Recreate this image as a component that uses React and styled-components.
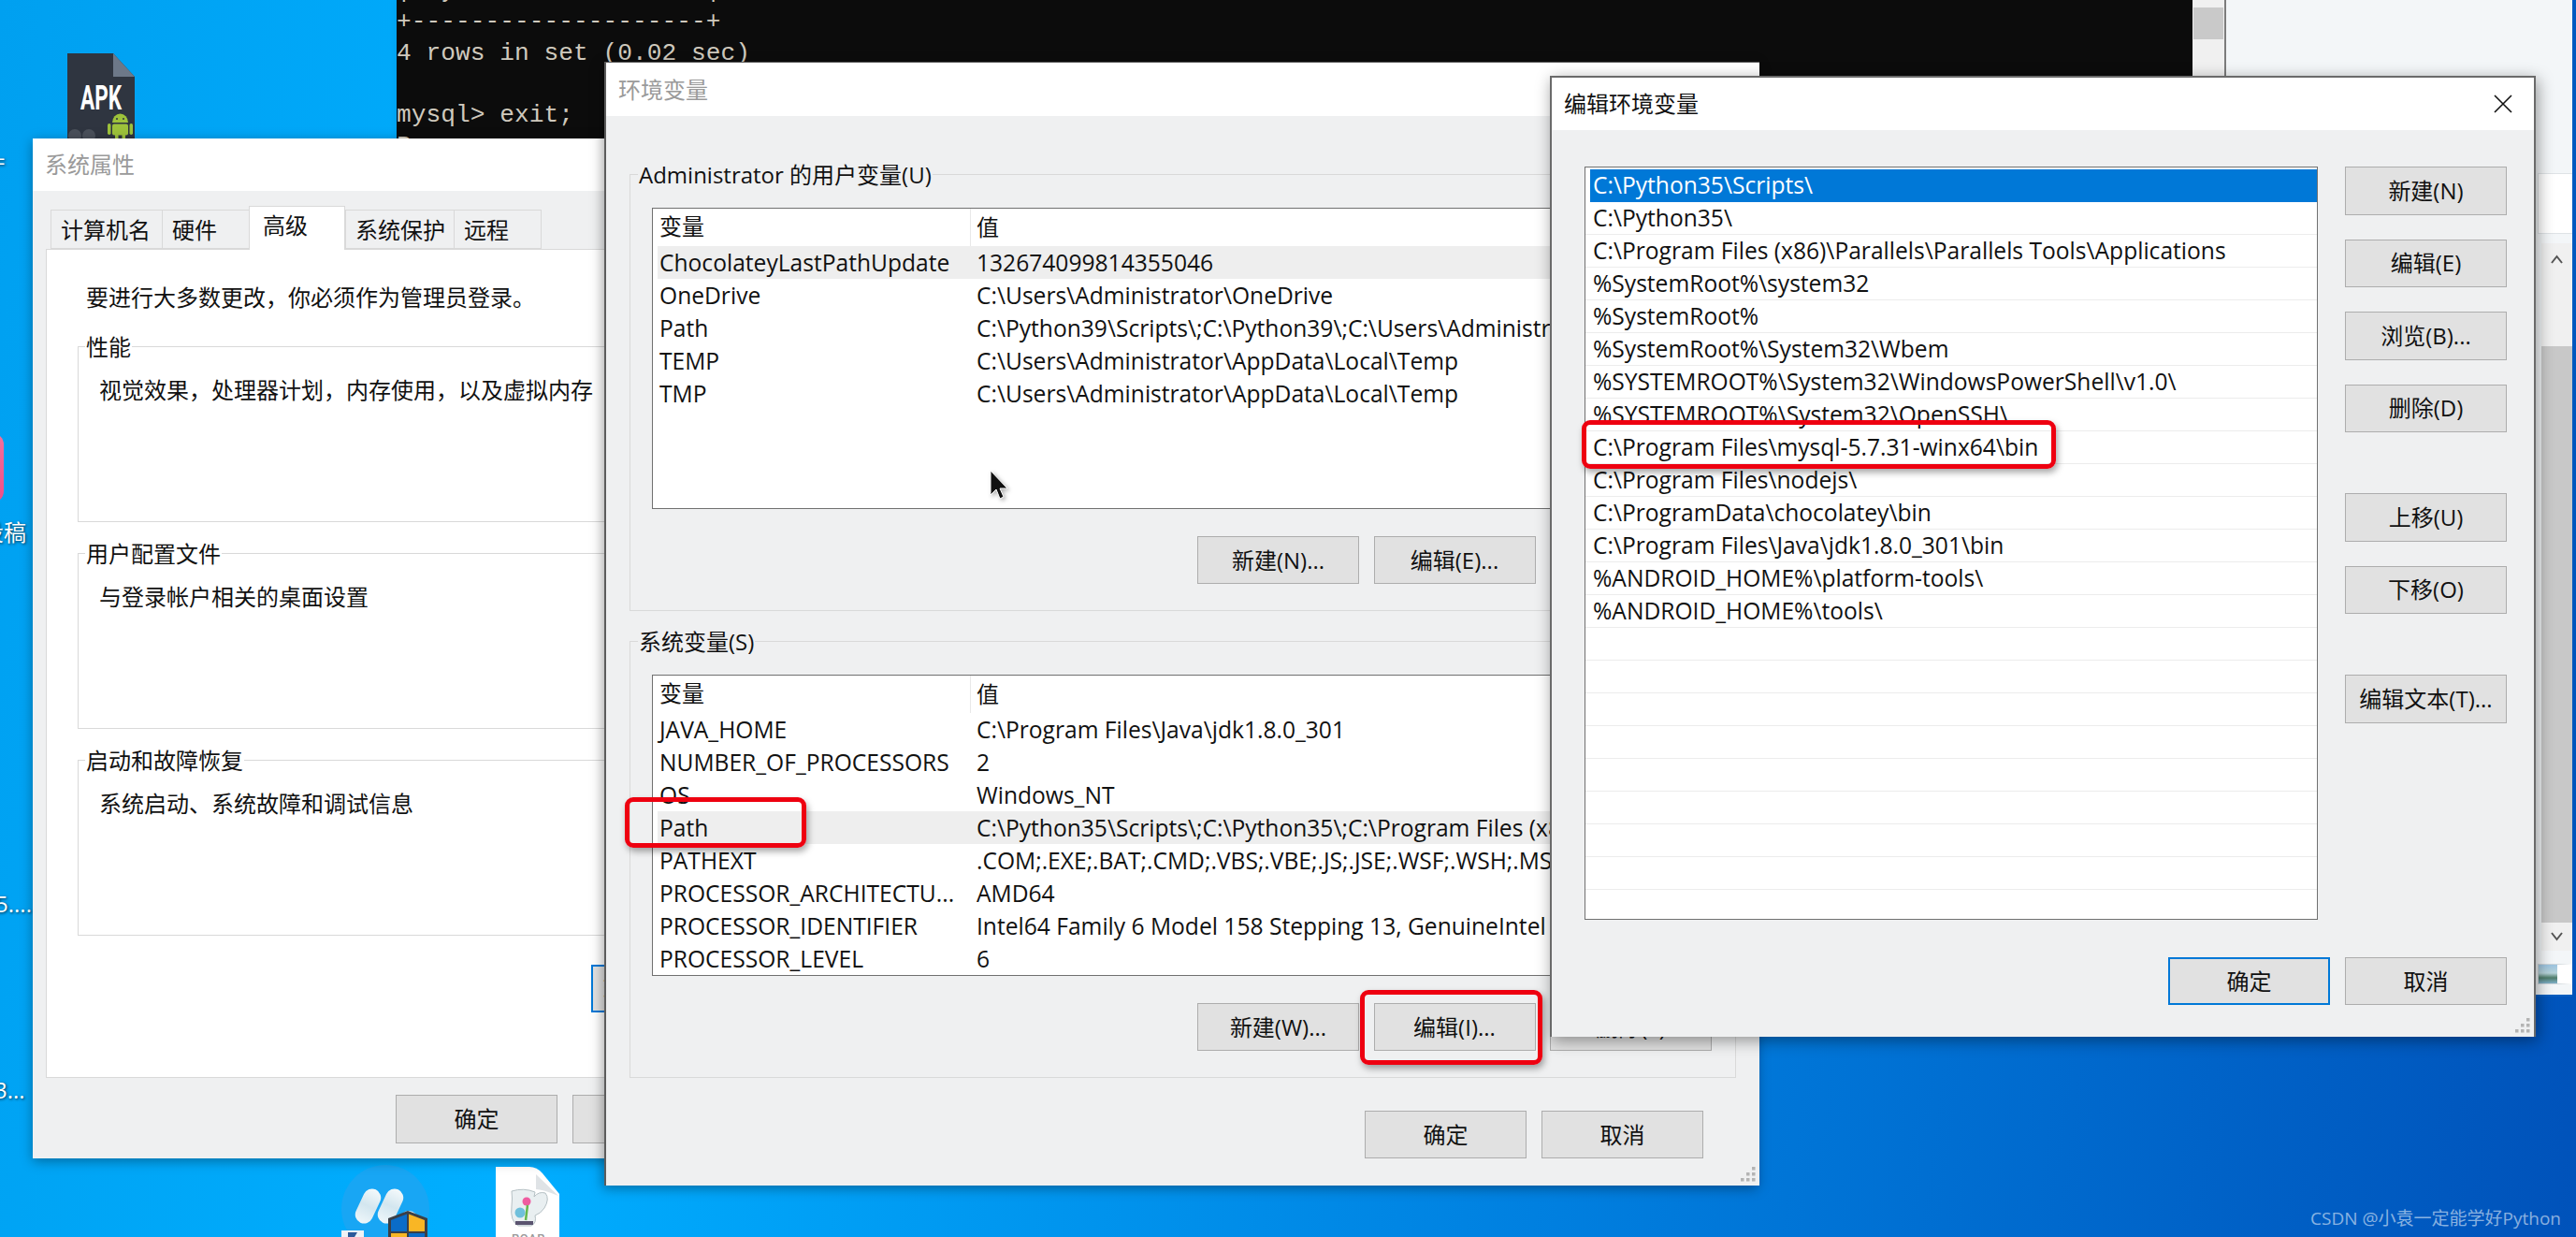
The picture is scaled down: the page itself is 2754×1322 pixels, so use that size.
import React from 'react'
import styled, { createGlobalStyle } from 'styled-components'

const GlobalStyle = createGlobalStyle`
  html, body { margin: 0; padding: 0; background: #0050b8; overflow: hidden; }
  * { box-sizing: border-box; }
  body { font-family: "Open Sans", "Noto Sans CJK SC", sans-serif; color: #111; }
`

const Desktop = styled.div`
  position: relative;
  width: 2754px;
  height: 1322px;
  overflow: hidden;
  background: linear-gradient(98deg, #00a0f0 0%, #00aeff 24%, #0080e0 62%, #0052ba 100%);
  font-size: 24px;
  line-height: 34px;
`

/* ---- desktop leftovers ---- */
const DeskLabel = styled.div`
  position: absolute;
  left: ${p => p.$x}px;
  top: ${p => p.$y}px;
  color: #fff;
  white-space: nowrap;
  text-shadow: 1px 1px 3px rgba(0, 0, 0, 0.7);
`
const PinkIcon = styled.div`
  position: absolute;
  left: -60px;
  top: 463px;
  width: 64px;
  height: 74px;
  border-radius: 12px;
  background: linear-gradient(180deg, #f4709c, #ee4d86);
`
const DeskIcon = styled.svg`
  position: absolute;
  left: ${p => p.$x}px;
  top: ${p => p.$y}px;
`

/* ---- terminal behind everything ---- */
const Terminal = styled.div`
  position: absolute;
  left: 424px;
  top: 0;
  width: 1956px;
  height: 300px;
  display: flex;
  background: #0c0c0c;
  border-right: 2px solid #7c7c7c;
  box-shadow: 4px 0 10px rgba(0, 0, 0, 0.18);
`
const TermText = styled.pre`
  flex: 1;
  margin: -26px 0 0;
  font-family: "Liberation Mono", monospace;
  font-size: 26.2px;
  letter-spacing: 0.03px;
  line-height: 33.3px;
  color: #cfc9bd;
`
const TermScroll = styled.div`
  width: 34px;
  padding: 8px 1px 0;
  background: #f0f0f0;
`
const TermThumb = styled.div`
  height: 34px;
  background: #c9c9c9;
`

/* ---- light window on the right ---- */
const BackWindow = styled.div`
  position: absolute;
  left: 2380px;
  top: 0;
  width: 370px;
  height: 1065px;
  background: #f3f6f8;
  border-bottom: 2px solid #0a5fc0;
  display: flex;
  flex-direction: column;
  align-items: flex-end;
  padding-top: 185px;
`
const BackBox = styled.div`
  width: 37px;
  height: 65px;
  background: #fff;
  border: 1px solid #dfe3e6;
  border-right: 0;
`
const BackScroll = styled.div`
  width: 33px;
  height: 756px;
  margin-top: 10px;
  background: #f0f0f0;
  padding-top: 110px;
  position: relative;
`
const BackThumb = styled.div`
  height: 616px;
  background: #c8c8c8;
`
const ScrollArrow = styled.svg`
  position: absolute;
  left: 10px;
  top: ${p => p.$y}px;
`
const BackPicture = styled.div`
  width: 37px;
  height: 22px;
  margin-top: 14px;
  border: 1px solid #cfd6da;
  border-right-width: 16px;
  border-right-color: #fff;
  background: linear-gradient(180deg, #9cc4e0 0%, #b7d3d9 45%, #4f7d6a 70%, #7fb0c8 100%);
`

/* ---- dialogs ---- */
const SystemWindow = styled.div`
  position: absolute;
  left: 35px;
  top: 148px;
  width: 800px;
  height: 1090px;
  background: #eff0f1;
  box-shadow: 0 3px 12px rgba(0, 0, 0, 0.35);
`
const EnvWindow = styled.div`
  position: absolute;
  left: 646px;
  top: 66px;
  width: 1235px;
  height: 1201px;
  background: #eff0f1;
  border: solid #5c5c5c;
  border-width: 1.5px 0 0 2px;
  box-shadow: -2px 3px 12px rgba(0, 0, 0, 0.35);
`
const EditWindow = styled.div`
  position: absolute;
  left: 1657px;
  top: 81px;
  width: 1054px;
  height: 1027px;
  background: #eff0f1;
  border: solid #6a6a6a;
  border-width: 2px 2px 0 2px;
  box-shadow: 2px 4px 16px rgba(0, 0, 0, 0.4);
`
const TitleBar = styled.div`
  height: ${p => p.$h}px;
  padding-left: ${p => p.$pad}px;
  display: flex;
  align-items: center;
  justify-content: space-between;
  background: #fff;
  color: ${p => (p.$active ? '#111' : '#9a9a9a')};
`
const CloseIcon = styled.svg`
  margin-right: 23px;
`

/* ---- system properties ---- */
const Tabs = styled.div`
  display: flex;
  align-items: flex-end;
  height: 46px;
  margin: 16px 0 0 19px;
`
const Tab = styled.div`
  width: ${p => p.$w}px;
  height: ${p => (p.$active ? 47 : 42)}px;
  padding-left: ${p => (p.$active ? 14 : 10)}px;
  padding-top: ${p => (p.$active ? 3 : 4)}px;
  margin-bottom: ${p => (p.$active ? -1 : 0)}px;
  position: relative;
  background: ${p => (p.$active ? '#fff' : '#eff0f1')};
  border: 1.5px solid #d9d9d9;
  border-bottom: ${p => (p.$active ? '0' : '1.5px solid #d9d9d9')};
  border-right-width: ${p => (p.$active ? '1.5px' : '0')};
  &:last-child { border-right-width: 1.5px; }
`
const Panel = styled.div`
  margin-left: 14px;
  width: 772px;
  height: 886px;
  padding: 34px 15px 0 33px;
  background: #fff;
  border: 1.5px solid #d9d9d9;
`
const Notice = styled.div`
  margin: 0 0 35px 9px;
`
const Group = styled.div`
  height: ${p => p.$h}px;
  margin-bottom: ${p => p.$gap}px;
  border: 1.5px solid #d9d9d9;
  background: ${p => p.$bg || 'transparent'};
`
const Legend = styled.div`
  width: fit-content;
  margin: -17px 0 0 7px;
  padding: 0 1px;
  background: ${p => p.$bg || '#eff0f1'};
`
const GroupText = styled.div`
  margin: 12px 0 0 22px;
`
const PanelAction = styled.div`
  display: flex;
  justify-content: flex-end;
  margin-top: -2px;
`
const Footer = styled.div`
  display: flex;
  justify-content: flex-end;
  gap: 16px;
  margin-top: ${p => p.$top}px;
  padding-right: ${p => p.$right}px;
`
const Btn = styled.div`
  width: 173px;
  height: ${p => p.$h || 51}px;
  flex: none;
  display: flex;
  align-items: center;
  justify-content: center;
  white-space: nowrap;
  background: #e1e1e1;
  border: ${p => (p.$primary ? '2.5px solid #0078d7' : '1.5px solid #adadad')};
`

/* ---- environment variables ---- */
const EnvBody = styled.div`
  padding: 62px 25px 0 25px;
`
const EnvGroup = styled(Group)`
  padding: 34px 23px 0 23px;
`
const EnvLegend = styled(Legend)`
  margin: -50px 0 0 -15px;
  position: relative;
  top: -1px;
`
const VarTable = styled.div`
  position: relative;
  width: 1135px;
  height: ${p => p.$h}px;
  margin-top: 17px;
  padding: 0 0 0 5px;
  overflow: hidden;
  background: #fff;
  border: 1.5px solid #707070;
  font-size: 24.6px;
`
const VarRow = styled.div`
  display: grid;
  grid-template-columns: 335px 1fr;
  height: ${p => (p.$head ? 40 : 35)}px;
  align-items: center;
  white-space: nowrap;
  background: ${p => (p.$active ? '#eeeeee' : 'transparent')};
`
const VarName = styled.div`
  padding-left: 2px;
  height: 100%;
  line-height: ${p => (p.$head ? 38 : 35)}px;
  font-size: ${p => (p.$head ? 24 : 24.6)}px;
  border-right: ${p => (p.$head ? '1.5px solid #e8e8e8' : '0')};
`
const VarValue = styled.div`
  padding-left: 6px;
  line-height: ${p => (p.$head ? 38 : 35)}px;
  font-size: ${p => (p.$head ? 24 : 24.6)}px;
`
const BtnRow = styled.div`
  display: flex;
  justify-content: flex-end;
  gap: 15.5px;
  margin-top: 29px;
  padding-right: 2px;
`

/* ---- edit dialog ---- */
const EditBody = styled.div`
  display: flex;
  gap: 29px;
  padding: 39px 0 0 35px;
`
const PathList = styled.div`
  width: 784px;
  height: 805px;
  padding-top: 1.5px;
  background: #fff;
  border: 1.5px solid #707070;
  overflow: hidden;
  font-size: 24.6px;
`
const PathRow = styled.div`
  height: 35px;
  line-height: 34px;
  margin-left: ${p => (p.$selected ? 5 : 0)}px;
  padding-left: ${p => (p.$selected ? 3 : 8)}px;
  white-space: nowrap;
  color: ${p => (p.$selected ? '#fff' : '#111')};
  background: ${p => (p.$selected ? '#0078d7' : '#fff')};
  border-bottom: 1.5px solid ${p => (p.$selected ? '#0078d7' : '#ececec')};
`
const ActionColumn = styled.div`
  display: flex;
  flex-direction: column;
  gap: 65px;
`
const ActionGroup = styled.div`
  display: flex;
  flex-direction: column;
  gap: 26px;
`
const Grip = styled.svg`
  position: absolute;
  right: 3px;
  bottom: 3px;
`

/* ---- overlays ---- */
const RedMark = styled.div`
  position: absolute;
  left: ${p => p.$x}px;
  top: ${p => p.$y}px;
  width: ${p => p.$w}px;
  height: ${p => p.$h}px;
  border: 5px solid #ee0010;
  border-radius: 9px;
  box-shadow: 2px 4px 7px rgba(0, 0, 0, 0.35);
`
const Watermark = styled.div`
  position: absolute;
  right: 16px;
  bottom: 8px;
  font-size: 19px;
  line-height: 24px;
  color: rgba(255, 255, 255, 0.55);
`
const Cursor = styled.svg`
  position: absolute;
  left: 1058px;
  top: 502px;
  filter: drop-shadow(2px 2px 2px rgba(0, 0, 0, 0.3));
`

const userVars = [
  ['ChocolateyLastPathUpdate', '132674099814355046', true],
  ['OneDrive', 'C:\\Users\\Administrator\\OneDrive'],
  ['Path', 'C:\\Python39\\Scripts\\;C:\\Python39\\;C:\\Users\\Administrator\\AppData\\Local\\Microsoft\\WindowsApps'],
  ['TEMP', 'C:\\Users\\Administrator\\AppData\\Local\\Temp'],
  ['TMP', 'C:\\Users\\Administrator\\AppData\\Local\\Temp'],
]
const systemVars = [
  ['JAVA_HOME', 'C:\\Program Files\\Java\\jdk1.8.0_301'],
  ['NUMBER_OF_PROCESSORS', '2'],
  ['OS', 'Windows_NT'],
  ['Path', 'C:\\Python35\\Scripts\\;C:\\Python35\\;C:\\Program Files (x86)\\Parallels\\Parallels Tools\\Applications', true],
  ['PATHEXT', '.COM;.EXE;.BAT;.CMD;.VBS;.VBE;.JS;.JSE;.WSF;.WSH;.MSC'],
  ['PROCESSOR_ARCHITECTU...', 'AMD64'],
  ['PROCESSOR_IDENTIFIER', 'Intel64 Family 6 Model 158 Stepping 13, GenuineIntel'],
  ['PROCESSOR_LEVEL', '6'],
]
const paths = [
  'C:\\Python35\\Scripts\\',
  'C:\\Python35\\',
  'C:\\Program Files (x86)\\Parallels\\Parallels Tools\\Applications',
  '%SystemRoot%\\system32',
  '%SystemRoot%',
  '%SystemRoot%\\System32\\Wbem',
  '%SYSTEMROOT%\\System32\\WindowsPowerShell\\v1.0\\',
  '%SYSTEMROOT%\\System32\\OpenSSH\\',
  'C:\\Program Files\\mysql-5.7.31-winx64\\bin',
  'C:\\Program Files\\nodejs\\',
  'C:\\ProgramData\\chocolatey\\bin',
  'C:\\Program Files\\Java\\jdk1.8.0_301\\bin',
  '%ANDROID_HOME%\\platform-tools\\',
  '%ANDROID_HOME%\\tools\\',
]
const emptyRows = Array.from({ length: 8 }, () => '')

const terminalText = `| sys                |
+--------------------+
4 rows in set (0.02 sec)

mysql> exit;
Bye`

const ResizeGrip = () => (
  <Grip width="18" height="18" viewBox="0 0 18 18" fill="#b4b4b4">
    <rect x="13" y="1" width="3.5" height="3.5" />
    <rect x="7" y="7" width="3.5" height="3.5" />
    <rect x="13" y="7" width="3.5" height="3.5" />
    <rect x="1" y="13" width="3.5" height="3.5" />
    <rect x="7" y="13" width="3.5" height="3.5" />
    <rect x="13" y="13" width="3.5" height="3.5" />
  </Grip>
)

const VariablesTable = ({ rows }) => (
  <VarTable $h={42 + rows.length * 35 + (rows.length < 8 ? 105 : 0)}>
    <VarRow $head>
      <VarName $head>变量</VarName>
      <VarValue $head>值</VarValue>
    </VarRow>
    {rows.map(([name, value, active]) => (
      <VarRow key={name} $active={active}>
        <VarName>{name}</VarName>
        <VarValue>{value}</VarValue>
      </VarRow>
    ))}
  </VarTable>
)

const ApkIcon = () => (
  <DeskIcon $x={72} $y={57} width="72" height="92" viewBox="0 0 72 92">
    <path d="M0 0 H49 L72 25 V92 H0 Z" fill="#2f3540" />
    <path d="M49 0 L72 25 H49 Z" fill="#6d7888" />
    <text x="14" y="60" fontFamily="Roboto, sans-serif" fontWeight="700" fontSize="36" fill="#fff" textLength="44" lengthAdjust="spacingAndGlyphs">APK</text>
    <circle cx="8" cy="88" r="7" fill="#4a505a" />
    <circle cx="23" cy="88" r="7" fill="#4a505a" />
    <path d="M48 74 a8 9 0 0 1 17 0 Z" fill="#9dc23b" />
    <circle cx="53" cy="70" r="1" fill="#2f3540" />
    <circle cx="60" cy="70" r="1" fill="#2f3540" />
    <rect x="48" y="75.500" width="17" height="12" rx="2" fill="#9dc23b" />
    <rect x="51" y="86" width="3.500" height="6" fill="#9dc23b" />
    <rect x="58.500" y="86" width="3.500" height="6" fill="#9dc23b" />
    <rect x="43" y="75" width="3.500" height="12" rx="1.700" fill="#9dc23b" />
    <rect x="66.500" y="75" width="3.500" height="12" rx="1.700" fill="#9dc23b" />
  </DeskIcon>
)

const MarkIcon = () => (
  <DeskIcon $x={362} $y={1244} width="100" height="78" viewBox="0 0 100 78">
    <defs>
      <linearGradient id="pill" x1="0" y1="0" x2="0" y2="1">
        <stop offset="0" stopColor="#f4f9fb" />
        <stop offset="0.5" stopColor="#d3e6ef" />
        <stop offset="1" stopColor="#eef6fa" />
      </linearGradient>
    </defs>
    <circle cx="50" cy="48" r="47" fill="#18a6f4" />
    <rect x="22" y="25.500" width="19" height="39" rx="9.500" transform="rotate(25 31.500 45)" fill="url(#pill)" />
    <rect x="46" y="25.500" width="19" height="39" rx="9.500" transform="rotate(25 55.500 45)" fill="url(#pill)" />
    <circle cx="75" cy="60" r="10" fill="#eef6fa" />
    <path d="M53 58 L74 50 L95 58 V78 H53 Z" fill="#3a3f47" />
    <path d="M56 60 L73 53.500 V72 H56 Z" fill="#0a6cc8" />
    <path d="M75 53.500 L92 60 V72 H75 Z" fill="#f9b625" />
    <rect x="56" y="74" width="17" height="4" fill="#f9b625" />
    <rect x="75" y="74" width="17" height="4" fill="#0a6cc8" />
    <rect x="3" y="71" width="24" height="7" fill="#eef2f5" />
    <path d="M10 73 H20 L17 78 H10 Z" fill="#2b5a9a" />
  </DeskIcon>
)

const JugIcon = () => (
  <DeskIcon $x={530} $y={1247} width="68" height="75" viewBox="0 0 68 75">
    <path d="M0 0 H36 Q44 0 50 7 L68 29 V75 H0 Z" fill="#fff" />
    <path d="M43 8 L67 31 Q50 24 43 24 Z" fill="#dfe3e6" />
    <path d="M17 26 Q30 22 42 27 L41 32 Q46 26 53 28 Q58 34 52 44 Q48 50 42 52 Q44 60 38 63 H24 Q15 58 17 42 Q18 34 17 26 Z" fill="#e9eff1" stroke="#b5c0c4" />
    <circle cx="33" cy="37" r="4.500" fill="#ef5ca0" />
    <circle cx="26" cy="49" r="5.500" fill="#6fc0dc" />
    <path d="M34 41 L32 57" stroke="#63b84c" strokeWidth="2.500" />
    <rect x="21" y="58" width="19" height="4" fill="#5b5470" />
    <text x="17" y="81" fontFamily="Roboto, sans-serif" fontSize="13" fontWeight="500" letterSpacing="0.500" fill="#999">ROAR</text>
  </DeskIcon>
)

const App = () => {
  return (
    <Desktop>
      <GlobalStyle />
      <ApkIcon />
      <DeskLabel $x={-8} $y={155}>=</DeskLabel>
      <PinkIcon />
      <DeskLabel $x={-20} $y={552}>投稿</DeskLabel>
      <DeskLabel $x={-5} $y={949}>5....</DeskLabel>
      <DeskLabel $x={-6} $y={1148}>3...</DeskLabel>
      <MarkIcon />
      <JugIcon />

      <Terminal>
        <TermText>{terminalText}</TermText>
        <TermScroll><TermThumb /></TermScroll>
      </Terminal>

      <BackWindow>
        <BackBox />
        <BackScroll>
          <ScrollArrow $y={12} width="13" height="10" viewBox="0 0 13 10" fill="none" stroke="#555" strokeWidth="2"><path d="M1 9 L6.500 2 L12 9" /></ScrollArrow>
          <BackThumb />
          <ScrollArrow $y={736} width="13" height="10" viewBox="0 0 13 10" fill="none" stroke="#555" strokeWidth="2"><path d="M1 1 L6.500 8 L12 1" /></ScrollArrow>
        </BackScroll>
        <BackPicture />
      </BackWindow>

      <SystemWindow>
        <TitleBar $h={56} $pad={13}>系统属性</TitleBar>
        <Tabs>
          <Tab $w={119}>计算机名</Tab>
          <Tab $w={93}>硬件</Tab>
          <Tab $w={103} $active>高级</Tab>
          <Tab $w={116}>系统保护</Tab>
          <Tab $w={94}>远程</Tab>
        </Tabs>
        <Panel>
          <Notice>要进行大多数更改，你必须作为管理员登录。</Notice>
          <Group $h={188} $gap={33} $bg="#fff">
            <Legend $bg="#fff">性能</Legend>
            <GroupText>视觉效果，处理器计划，内存使用，以及虚拟内存</GroupText>
          </Group>
          <Group $h={188} $gap={33} $bg="#fff">
            <Legend $bg="#fff">用户配置文件</Legend>
            <GroupText>与登录帐户相关的桌面设置</GroupText>
          </Group>
          <Group $h={188} $gap={33} $bg="#fff">
            <Legend $bg="#fff">启动和故障恢复</Legend>
            <GroupText>系统启动、系统故障和调试信息</GroupText>
          </Group>
          <PanelAction><Btn $primary>环境变量(N)...</Btn></PanelAction>
        </Panel>
        <Footer $top={18} $right={50}>
          <Btn $h={52}>确定</Btn>
          <Btn $h={52}>取消</Btn>
        </Footer>
      </SystemWindow>

      <EnvWindow>
        <TitleBar $h={57} $pad={13}>环境变量</TitleBar>
        <EnvBody>
          <Group as={EnvGroup} $h={467} $gap={32}>
            <EnvLegend>Administrator 的用户变量(U)</EnvLegend>
            <VariablesTable rows={userVars} />
            <BtnRow>
              <Btn>新建(N)...</Btn>
              <Btn>编辑(E)...</Btn>
              <Btn>删除(D)</Btn>
            </BtnRow>
          </Group>
          <Group as={EnvGroup} $h={467} $gap={0}>
            <EnvLegend>系统变量(S)</EnvLegend>
            <VariablesTable rows={systemVars} />
            <BtnRow>
              <Btn>新建(W)...</Btn>
              <Btn>编辑(I)...</Btn>
              <Btn>删除(L)</Btn>
            </BtnRow>
          </Group>
        </EnvBody>
        <Footer $top={35} $right={60}>
          <Btn>确定</Btn>
          <Btn>取消</Btn>
        </Footer>
        <ResizeGrip />
      </EnvWindow>

      <EditWindow>
        <TitleBar $h={56} $pad={13} $active>
          编辑环境变量
          <CloseIcon width="20" height="20" viewBox="0 0 20 20" stroke="#111" strokeWidth="1.600"><path d="M1 1 L19 19 M19 1 L1 19" /></CloseIcon>
        </TitleBar>
        <EditBody>
          <PathList>
            {paths.map((p, i) => (
              <PathRow key={p} $selected={i === 0}>{p}</PathRow>
            ))}
            {emptyRows.map((p, i) => (
              <PathRow key={i}>&nbsp;</PathRow>
            ))}
          </PathList>
          <ActionColumn>
            <ActionGroup>
              <Btn $h={51.500}>新建(N)</Btn>
              <Btn $h={51.500}>编辑(E)</Btn>
              <Btn $h={51.500}>浏览(B)...</Btn>
              <Btn $h={51.500}>删除(D)</Btn>
            </ActionGroup>
            <ActionGroup>
              <Btn $h={51.500}>上移(U)</Btn>
              <Btn $h={51.500}>下移(O)</Btn>
            </ActionGroup>
            <ActionGroup>
              <Btn $h={51.500}>编辑文本(T)...</Btn>
            </ActionGroup>
          </ActionColumn>
        </EditBody>
        <Footer $top={40} $right={29}>
          <Btn $primary>确定</Btn>
          <Btn>取消</Btn>
        </Footer>
        <ResizeGrip />
      </EditWindow>

      <RedMark $x={668} $y={852} $w={194} $h={54} />
      <RedMark $x={1454} $y={1058} $w={195} $h={80} />
      <RedMark $x={1691} $y={449} $w={507} $h={52} />

      <Cursor width="20" height="32" viewBox="0 0 20 32">
        <path d="M1 1 V27 L7 21 L11 31 L15 29 L11 20 H19 Z" fill="#111" stroke="#fff" strokeWidth="1" />
      </Cursor>

      <Watermark>CSDN @小袁一定能学好Python</Watermark>
    </Desktop>
  )
}

export default App
